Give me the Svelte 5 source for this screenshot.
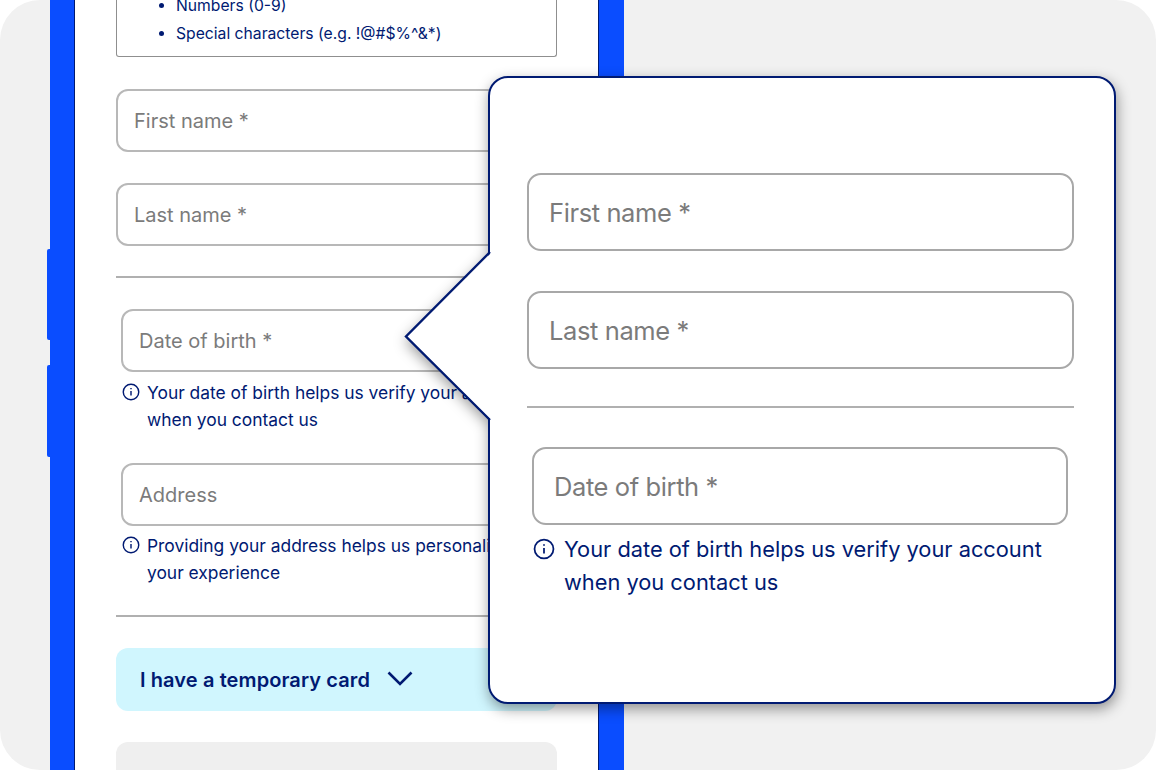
<script>
	const rules = ["Numbers (0-9)", "Special characters (e.g. !@#$%^&*)"];
	const helpDob = ["Your date of birth helps us verify your account", "when you contact us"];
	const helpAddress = ["Providing your address helps us personalise", "your experience"];
</script>

{#snippet info()}
	<svg class="info" viewBox="0 0 20 20" fill="none" stroke="currentColor" stroke-width="1.6">
		<circle cx="10" cy="10" r="8.6" />
		<path d="M10 9v5" />
		<path d="M10 5.600v1.400" />
	</svg>
{/snippet}

{#snippet help(lines)}
	{@render info()}
	<span>
		{#each lines as line}
			<span class="line">{line}</span>
		{/each}
	</span>
{/snippet}

<div class="stage">
	<div class="phone">
		<span class="side-btn one"></span>
		<span class="side-btn two"></span>
		<div class="screen">
			<div class="rules">
				<ul>
					{#each rules as rule}
						<li>{rule}</li>
					{/each}
				</ul>
			</div>

			<div class="field">First name *</div>
			<div class="field">Last name *</div>
			<hr />

			<div class="inset">
				<div class="field">Date of birth *</div>
				<div class="help">{@render help(helpDob)}</div>
			</div>
			<div class="inset">
				<div class="field">Address</div>
				<div class="help">{@render help(helpAddress)}</div>
			</div>
			<hr class="second" />

			<div class="accordion">
				<span>I have a temporary card</span>
				<svg viewBox="0 0 26 15" fill="none" stroke="currentColor" stroke-width="2.600">
					<path d="M1.500 1.500 13 13 24.500 1.500" />
				</svg>
			</div>
			<div class="placeholder"></div>
		</div>
	</div>

	<div class="callout">
		<svg class="arrow" viewBox="0 0 90 172" fill="none">
			<path d="M88 1 3 85.500 88 170 90 172V0Z" fill="#fff" />
			<path d="M86 1 2 85.500 86 169" stroke="#001a72" stroke-width="2.400" />
		</svg>
		<div class="callout-body">
			<div class="field big">First name *</div>
			<div class="field big">Last name *</div>
			<hr />
			<div class="inset">
				<div class="field big">Date of birth *</div>
				<div class="help big-help">{@render help(helpDob)}</div>
			</div>
		</div>
	</div>
</div>

<style>
	:global(body) {
		background: #fff;
		font-family: Inter, "Noto Sans", sans-serif;
	}

	.stage {
		position: relative;
		height: 770px;
		padding-left: 50px;
		box-sizing: border-box;
		background: #f1f1f1;
		border-radius: 40px;
		overflow: hidden;
	}

	.phone {
		position: relative;
		width: 574px;
		height: 100%;
		box-sizing: border-box;
		padding: 0 25px 0 24px;
		background: #0a4dff;
	}

	.side-btn {
		position: absolute;
		left: -3px;
		width: 3px;
		background: #0a4dff;
		border-radius: 2px 0 0 2px;
	}

	.side-btn.one {
		top: 249px;
		height: 91px;
	}

	.side-btn.two {
		top: 365px;
		height: 92px;
	}

	.screen {
		height: 100%;
		box-sizing: border-box;
		padding: 0 41px;
		background: #fff;
		border: solid #001a72;
		border-width: 0 1px;
		overflow: hidden;
		color: #001a72;
	}

	.rules {
		display: flow-root;
		height: 57px;
		margin-bottom: 32px;
		box-sizing: border-box;
		border: 1px solid #8f8f8f;
		border-top: 0;
		border-radius: 0 0 3px 3px;
	}

	ul {
		margin: -8.500px 0 0;
		padding: 0 0 0 59px;
		font-size: 15.700px;
		line-height: 28px;
	}

	.field {
		display: flex;
		align-items: center;
		height: 63px;
		margin-bottom: 31px;
		padding: 1px 0 0 16px;
		box-sizing: border-box;
		border: 2px solid #b8b8b8;
		border-radius: 12px;
		font-size: 20px;
		color: #7b7b7b;
		background: #fff;
	}

	hr {
		height: 2px;
		margin: -1px 0 31px;
		border: 0;
		background: #b0b0b0;
	}

	.inset {
		margin: 0 0 0 5px;
	}

	.inset .field {
		margin-bottom: 7px;
	}

	.inset + .inset .field {
		margin-bottom: 6px;
	}

	.help {
		display: flex;
		gap: 7px;
		margin: 0 0 30px;
		font-size: 17.400px;
		line-height: 27px;
	}

	.line {
		display: block;
	}

	.info {
		flex: none;
		width: 18px;
		height: 18px;
		margin-top: 4px;
		margin-left: 1px;
	}

	.accordion {
		display: flex;
		align-items: center;
		gap: 17px;
		height: 63px;
		margin-bottom: 31px;
		padding-left: 24px;
		background: #d0f6fe;
		border-radius: 12px;
		font-size: 20px;
		letter-spacing: 0.1px;
		font-weight: 600;
	}

	.accordion svg {
		width: 26px;
		height: 15px;
		margin-top: -2px;
	}

	.placeholder {
		height: 60px;
		background: #efefef;
		border-radius: 12px;
	}

	.callout {
		position: absolute;
		left: 488px;
		top: 76px;
		width: 628px;
		height: 628px;
		filter: drop-shadow(1px 5px 7px rgba(0, 0, 0, 0.4));
	}

	.arrow {
		position: absolute;
		left: -84px;
		top: 175px;
		width: 90px;
		height: 172px;
		z-index: 1;
	}

	.callout-body {
		height: 100%;
		box-sizing: border-box;
		padding: 95px 40px 0 37px;
		background: #fff;
		border: 2px solid #001a72;
		border-radius: 20px;
		color: #001a72;
	}

	.field.big {
		height: 78px;
		margin-bottom: 40px;
		padding: 0 0 0 20px;
		border-color: #a8a8a8;
		border-radius: 14px;
		font-size: 25.500px;
		letter-spacing: -0.4px;
	}

	.callout-body hr {
		margin: -3px 0 39px;
	}

	.callout-body .inset {
		margin: 0 6px 0 5px;
	}

	.callout-body .inset .field {
		margin-bottom: 8px;
	}

	.help.big-help {
		gap: 9px;
		font-size: 21.800px;
		line-height: 33px;
	}

	.big-help .info {
		width: 22px;
		height: 22px;
		margin-top: 5px;
		margin-left: 1px;
	}
</style>
